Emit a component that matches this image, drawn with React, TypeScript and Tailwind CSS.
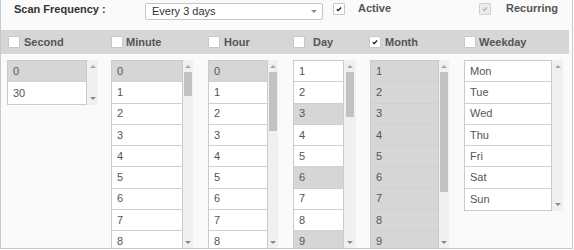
import React from "react";

function Check({ disabled }: { disabled?: boolean }) {
  return (
    <svg width="12" height="12" viewBox="0 0 12 12" className="block">
      <path
        d="M3.3 6.2 L5 7.8 L8.6 4.3"
        fill="none"
        stroke={disabled ? "#b5b5b5" : "#222"}
        strokeWidth="1.6"
      />
    </svg>
  );
}

function CheckBox({ checked, disabled }: { checked?: boolean; disabled?: boolean }) {
  return (
    <div
      className={
        disabled
          ? "w-[12px] h-[12px] shrink-0 border border-[#d0d0d0] bg-[#ececec] rounded-[1px] flex items-center justify-center"
          : "w-[12px] h-[12px] shrink-0 border border-[#c8c8c8] bg-white rounded-[1px] flex items-center justify-center"
      }
    >
      {checked && <Check disabled={disabled} />}
    </div>
  );
}

function UpArrow() {
  return (
    <div className="h-[12px] w-full flex items-center justify-center shrink-0">
      <div className="w-0 h-0 border-x-[3px] border-x-transparent border-b-[3px] border-b-[#a8a8a8]" />
    </div>
  );
}

function DownArrow() {
  return (
    <div className="h-[12px] w-full flex items-center justify-center shrink-0">
      <div className="w-0 h-0 border-x-[3px] border-x-transparent border-t-[3px] border-t-[#8a8a8a]" />
    </div>
  );
}

function Scrollbar({ w, thumb }: { w: string; thumb?: string }) {
  return (
    <div className={w + " bg-[#f0f0f0] flex flex-col items-center shrink-0"}>
      <UpArrow />
      {thumb && <div className={thumb + " w-[8px] bg-[#c2c2c2] shrink-0"} />}
      <div className="flex-1" />
      <DownArrow />
    </div>
  );
}

type Item = { label: string; sel: boolean };

function ListCol({
  colW,
  listW,
  sbW,
  thumb,
  items,
  long,
}: {
  colW: string;
  listW: string;
  sbW: string;
  thumb?: string;
  items: Item[];
  long?: boolean;
}) {
  const shown = long ? items.slice(0, 9) : items;
  return (
    <div className={colW + " shrink-0 flex items-start"}>
      <div className={long ? "flex h-[188px]" : "flex"}>
        <div
          className={
            listW +
            (long
              ? " border border-b-0 border-[#cbcbcb] bg-white overflow-hidden"
              : " border border-[#cbcbcb] bg-white")
          }
        >
          {shown.map((it, i) => (
            <div
              key={i}
              className={
                (it.sel ? "bg-[#d6d6d6] " : "bg-white ") +
                (i === shown.length - 1 ? "" : "border-b border-[#cfcfcf] ") +
                "h-[21.25px] flex items-center pl-[5px] text-[11px] text-[#555]"
              }
            >
              {it.label}
            </div>
          ))}
        </div>
        <Scrollbar w={sbW} thumb={thumb} />
      </div>
    </div>
  );
}

function HeaderCell({ colW, label, checked, gap }: { colW: string; label: string; checked?: boolean; gap: string }) {
  return (
    <div className={colW + " shrink-0 flex items-center"}>
      <CheckBox checked={checked} />
      <span className={gap + " text-[11px] font-bold text-[#555] leading-[13px]"}>{label}</span>
    </div>
  );
}

const range = (a: number, b: number) => Array.from({ length: b - a + 1 }, (_, i) => a + i);

export default function App() {
  const seconds: Item[] = [
    { label: "0", sel: true },
    { label: "30", sel: false },
  ];
  const minutes: Item[] = range(0, 59).map((n) => ({ label: String(n), sel: n === 0 }));
  const hours: Item[] = range(0, 23).map((n) => ({ label: String(n), sel: n === 0 }));
  const days: Item[] = range(1, 31).map((n) => ({ label: String(n), sel: n % 3 === 0 }));
  const months: Item[] = range(1, 12).map((n) => ({ label: String(n), sel: true }));
  const weekdays: Item[] = ["Mon", "Tue", "Wed", "Thu", "Fri", "Sat", "Sun"].map((d) => ({ label: d, sel: false }));

  return (
    <div className="w-[574px] h-[250px] bg-white font-['Liberation_Sans',Arial,sans-serif]">
      <div className="w-[573px] h-[249px] bg-[#fafafa] border-l border-r border-b border-[#c9c9c9] overflow-hidden flex flex-col">
        {/* top row */}
        <div className="h-[30px] pt-[3px] flex items-start shrink-0">
          <div className="w-[144px] pl-[13px] text-[11px] font-bold text-[#333] leading-[13px]">Scan Frequency :</div>
          <div className="w-[178px] h-[17px] bg-white border border-[#c6c6c6] rounded-[2px] flex items-center pl-[6px] pr-[5px] text-[11px] text-[#333]">
            <span className="flex-1">Every 3 days</span>
            <div className="w-0 h-0 border-x-[3px] border-x-transparent border-t-[3px] border-t-[#888]" />
          </div>
          <div className="w-[146px] ml-[10px] flex items-start">
            <CheckBox checked />
            <span className="ml-[13px] text-[11px] font-bold text-[#555] leading-[11px]">Active</span>
          </div>
          <div className="flex items-start">
            <CheckBox checked disabled />
            <span className="ml-[15px] text-[11px] font-bold text-[#555] leading-[11px]">Recurring</span>
          </div>
        </div>

        {/* header band */}
        <div className="h-[24px] mr-[3px] bg-[#d6d6d6] flex items-center pl-[7px] shrink-0">
          <HeaderCell colW="w-[103px]" label="Second" gap="ml-[4px]" />
          <HeaderCell colW="w-[97px]" label="Minute" gap="ml-[3px]" />
          <HeaderCell colW="w-[85px]" label="Hour" gap="ml-[4px]" />
          <HeaderCell colW="w-[76px]" label="Day" gap="ml-[8px]" />
          <HeaderCell colW="w-[95px]" label="Month" checked gap="ml-[4px]" />
          <HeaderCell colW="w-[99px]" label="Weekday" gap="ml-[3px]" />
        </div>

        {/* lists */}
        <div className="mt-[6px] h-[188px] flex items-start pl-[6px] shrink-0">
          <ListCol colW="w-[104px]" listW="w-[80px]" sbW="w-[11px]" items={seconds} />
          <ListCol colW="w-[97px]" listW="w-[72px]" sbW="w-[10px]" thumb="h-[24px]" items={minutes} long />
          <ListCol colW="w-[85px]" listW="w-[60px]" sbW="w-[10px]" thumb="h-[59px]" items={hours} long />
          <ListCol colW="w-[77px]" listW="w-[51px]" sbW="w-[12px]" thumb="h-[45px]" items={days} long />
          <ListCol colW="w-[94px]" listW="w-[69px]" sbW="w-[10px]" thumb="h-[120px]" items={months} long />
          <ListCol colW="w-[99px]" listW="w-[88px]" sbW="w-[11px]" items={weekdays} />
        </div>
      </div>
    </div>
  );
}
